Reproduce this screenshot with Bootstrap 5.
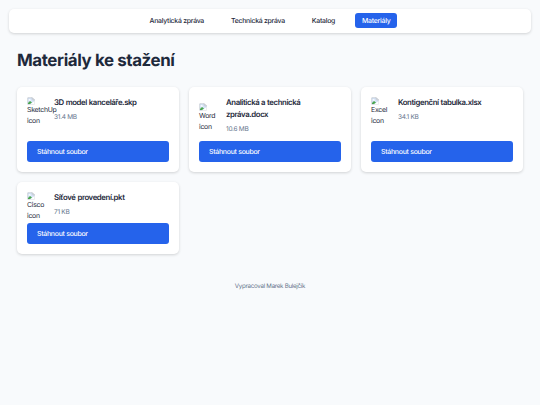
<!DOCTYPE html>
<html lang="cs">
<head>
  <meta charset="UTF-8">
  <meta name="viewport" content="width=device-width, initial-scale=1.0">
  <title>Materiály ke stažení</title>
  <link href="https://cdn.jsdelivr.net/npm/bootstrap@5.3.0/dist/css/bootstrap.min.css" rel="stylesheet">
  <style>
    body {
      font-family: Inter, "Liberation Sans", sans-serif;
      font-size: 6.9px;
      line-height: 11px;
      letter-spacing: -0.26px;
      text-rendering: geometricPrecision;
      color: #1e293b;
      background-color: #f8fafc;
    }

    .top-menu {
      height: 24px;
      margin: 9px 9px 0;
      padding-bottom: 2px;
      gap: 13.5px;
      border-radius: 5px;
      box-shadow: 0 1px 3px rgba(0, 0, 0, 0.16);
    }

    .top-menu .nav-link {
      padding: 2px 6.75px;
      font-weight: 500;
      color: #1e293b;
      border-radius: 3px;
    }

    .top-menu .nav-link.active {
      color: #fff;
      background-color: #2563eb;
    }

    main {
      padding: 17px 17px 0;
    }

    h1 {
      font-size: 16.9px;
      font-weight: 700;
      line-height: 22px;
      letter-spacing: -0.4px;
      margin-bottom: 15px;
    }

    .file-grid {
      grid-template-columns: repeat(3, 1fr);
      gap: 10px;
    }

    .file-card {
      --bs-card-border-width: 0;
      --bs-card-border-radius: 5px;
      padding: 10px;
      color: #1e293b;
      box-shadow: 0 1px 3px rgba(0, 0, 0, 0.16);
    }

    .file-head {
      min-height: 25px;
      margin-bottom: 6.5px;
    }

    .file-icon {
      width: 20px;
      height: 25px;
      margin-right: 7px;
      overflow-wrap: normal;
    }

    .file-icon svg {
      display: block;
      width: 8px;
      height: 8px;
      margin-bottom: -1px;
    }

    h2 {
      font-size: 7.8px;
      font-weight: 600;
      line-height: 11.8px;
      letter-spacing: -0.4px;
      word-spacing: 0.3px;
      margin-bottom: 3.5px;
    }

    .file-size {
      font-size: 6.5px;
      line-height: 10px;
      color: #64748b;
    }

    .btn-download {
      --bs-btn-color: #fff;
      --bs-btn-bg: #2563eb;
      --bs-btn-hover-color: #fff;
      --bs-btn-hover-bg: #1d4ed8;
      --bs-btn-border-width: 0;
      --bs-btn-border-radius: 3px;
      --bs-btn-padding-x: 10px;
      --bs-btn-padding-y: 5px;
      --bs-btn-font-size: 6.9px;
      --bs-btn-font-weight: 500;
      --bs-btn-line-height: 11px;
    }

    footer {
      margin-top: 26.6px;
      font-size: 6.15px;
      color: #64748b;
    }
  </style>
</head>
<body>

  <!-- Chybějící obrázek -->
  <svg class="d-none">
    <symbol id="missing" viewBox="0 0 16 16">
      <path d="M1.5 1.5h9l4 4v9h-13z" fill="#d7e5f8" stroke="#a9afb6"/>
      <path d="M10.5 1.5v4h4z" fill="#fff" stroke="#a9afb6"/>
      <path d="M3 6q1-3 3-1q2 0 2 2H3z" fill="#fff"/>
      <path d="M2 14V12l4-4l4 3l-4 3z" fill="#4ba64f"/>
      <path d="M6 15l9-7v7z" fill="#fff"/>
    </symbol>
  </svg>

  <nav class="top-menu nav bg-white justify-content-center align-items-center">
    <a class="nav-link" href="#">Analytická zpráva</a>
    <a class="nav-link" href="#">Technická zpráva</a>
    <a class="nav-link" href="#">Katalog</a>
    <a class="nav-link active" href="#">Materiály</a>
  </nav>

  <main>
    <h1>Materiály ke stažení</h1>

    <div class="file-grid d-grid">
      <div class="card file-card">
        <div class="file-head d-flex align-items-center">
          <div class="file-icon flex-shrink-0"><svg><use href="#missing"/></svg>SketchUp icon</div>
          <div>
            <h2>3D model kanceláře.skp</h2>
            <div class="file-size">31.4 MB</div>
          </div>
        </div>
        <a href="#" class="btn btn-download text-start mt-auto">Stáhnout soubor</a>
      </div>

      <div class="card file-card">
        <div class="file-head d-flex align-items-center">
          <div class="file-icon flex-shrink-0"><svg><use href="#missing"/></svg>Word icon</div>
          <div>
            <h2>Analitická a technická<br>zpráva.docx</h2>
            <div class="file-size">10.6 MB</div>
          </div>
        </div>
        <a href="#" class="btn btn-download text-start mt-auto">Stáhnout soubor</a>
      </div>

      <div class="card file-card">
        <div class="file-head d-flex align-items-center">
          <div class="file-icon flex-shrink-0"><svg><use href="#missing"/></svg>Excel icon</div>
          <div>
            <h2>Kontigenční tabulka.xlsx</h2>
            <div class="file-size">34.1 KB</div>
          </div>
        </div>
        <a href="#" class="btn btn-download text-start mt-auto">Stáhnout soubor</a>
      </div>

      <div class="card file-card">
        <div class="file-head d-flex align-items-center">
          <div class="file-icon flex-shrink-0"><svg><use href="#missing"/></svg>Cisco icon</div>
          <div>
            <h2>Síťové provedení.pkt</h2>
            <div class="file-size">71 KB</div>
          </div>
        </div>
        <a href="#" class="btn btn-download text-start mt-auto">Stáhnout soubor</a>
      </div>
    </div>
  </main>

  <footer class="text-center">Vypracoval Marek Bulejčík</footer>

  <script src="https://cdn.jsdelivr.net/npm/bootstrap@5.3.0/dist/js/bootstrap.bundle.min.js"></script>
</body>
</html>
